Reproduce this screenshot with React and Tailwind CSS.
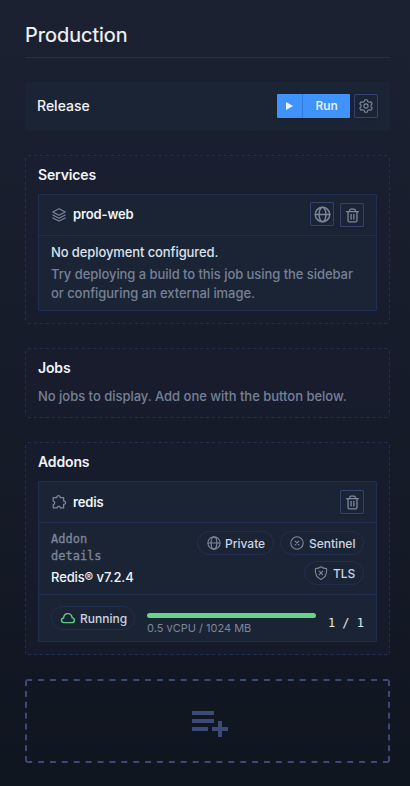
function Icon({ size = 16, width = 1.25, className = "", children }) {
  return (
    <svg
      width={size}
      height={size}
      viewBox="0 0 16 16"
      fill="none"
      stroke="currentColor"
      strokeWidth={width}
      strokeLinecap="round"
      strokeLinejoin="round"
      className={`shrink-0 ${className}`}
    >
      {children}
    </svg>
  );
}

const Globe = (props) => (
  <Icon {...props}>
    <circle cx="8" cy="8" r="6.1" />
    <ellipse cx="8" cy="8" rx="2.9" ry="6.1" />
    <path d="M1.9 8H14.1" />
  </Icon>
);

const Trash = (props) => (
  <Icon {...props}>
    <path d="M2.4 4.4H13.6" />
    <path d="M5.4 4.2V3Q5.4 2 6.4 2H9.6Q10.6 2 10.6 3V4.2" />
    <path d="M3.8 4.6V12.6Q3.8 14 5.2 14H10.8Q12.2 14 12.2 12.6V4.6" />
    <path d="M6.7 7V11.4M9.3 7V11.4" />
  </Icon>
);

const Gear = (props) => (
  <Icon {...props}>
    <circle cx="8" cy="8" r="2.1" />
    <path d="M6.9 1.7H9.1L9.7 3.5L11.2 4.3L13 3.9L14.2 5.8L13 7.2V8.8L14.2 10.2L13 12.1L11.2 11.7L9.7 12.5L9.1 14.3H6.9L6.3 12.5L4.8 11.7L3 12.1L1.8 10.2L3 8.8V7.2L1.8 5.8L3 3.9L4.8 4.3L6.3 3.5Z" />
  </Icon>
);

const Stack = (props) => (
  <Icon {...props}>
    <path d="M8 1.8L14.2 5L8 8.2L1.8 5Z" />
    <path d="M1.8 8L8 11.2L14.2 8" />
    <path d="M1.8 10.9L8 14.1L14.2 10.9" />
  </Icon>
);

const Puzzle = (props) => (
  <Icon {...props}>
    <path d="M2.2 3.6H5.8C5.6 1 9.4 1 9.2 3.6H12.6V7C15.2 6.8 15.2 10.5 12.6 10.3V13.9H9.4C9.3 12 6.2 12 6.1 13.9H2.2V10.5C4.3 10.5 4.3 7.2 2.2 7.1Z" />
  </Icon>
);

const CircleX = (props) => (
  <Icon {...props}>
    <circle cx="8" cy="8" r="6.2" />
    <path d="M6.1 6.1L9.9 9.9M9.9 6.1L6.1 9.9" />
  </Icon>
);

const ShieldX = (props) => (
  <Icon {...props}>
    <path d="M8 1.7C9.6 3 11.5 3.6 13.6 3.6C14.1 8.4 12.4 12.6 8 14.4C3.6 12.6 1.9 8.4 2.4 3.6C4.5 3.6 6.4 3 8 1.7Z" />
    <path d="M6.3 6.2L9.7 9.6M9.7 6.2L6.3 9.6" />
  </Icon>
);

const Cloud = (props) => (
  <Icon {...props}>
    <path d="M4.1 12.6C0.8 12.6 0.6 8.6 3.6 8C4 2.2 11.4 2.2 12.1 7.6C15.4 8.3 15 12.6 12 12.6Z" />
  </Icon>
);

function IconButton({ children, className = "" }) {
  return (
    <button className={`flex h-6 w-6 shrink-0 items-center justify-center rounded-[1px] border border-[#35426d] text-[#7c8799] shadow-sm ${className}`}>
      {children}
    </button>
  );
}

function Section({ title, className, children }) {
  return (
    <section
      className={`mt-6 rounded-[3px] bg-[#1a1e31]/50 bg-[linear-gradient(90deg,#272f50_50%,transparent_50%),linear-gradient(90deg,#272f50_50%,transparent_50%),linear-gradient(#272f50_50%,transparent_50%),linear-gradient(#272f50_50%,transparent_50%)] bg-size-[5.94px_1px,5.94px_1px,1px_5.9px,1px_5.9px] bg-position-[3px_0,3px_100%,0_3px,100%_3px] [background-repeat:repeat-x,repeat-x,repeat-y,repeat-y] p-[13px] ${className}`}
    >
      <h2 className="-mt-[3px] text-[14px] leading-5 font-semibold tracking-[-0.01em] text-[#f1f5f9]">{title}</h2>
      {children}
    </section>
  );
}

function Pill({ icon, children, className = "" }) {
  return (
    <span className={`flex h-6 items-center rounded-full border border-[#222e50] text-[12px] leading-4 font-medium text-[#cbd5e1] ${className}`}>
      {icon}
      <span className="pt-px">{children}</span>
    </span>
  );
}

function CardHeader({ icon, name, nameClass = "", children }) {
  return (
    <div className="flex h-[41px] items-center border-b border-[#222e50] px-3">
      {icon}
      <span className={`ml-1.5 text-[13px] leading-5 font-semibold tracking-[-0.01em] text-[#f1f5f9] ${nameClass}`}>{name}</span>
      <div className="ml-auto flex gap-1.5">{children}</div>
    </div>
  );
}

export default function App() {
  return (
    <main className="flex h-[786px] w-[410px] flex-col bg-linear-to-b from-[#1c2132] to-[#101620] pr-5 pl-[25px] font-['Inter',sans-serif]">
      <h1 className="h-[58px] border-b border-[#242e50] pt-[21px] text-[20px] leading-7 text-[#f1f5f9] [-webkit-text-stroke:0.2px_#f1f5f9]">Production</h1>
      <div className="mt-6 flex h-[49px] items-center rounded-[4px] bg-[#1b2435] px-3 pb-px">
        <span className="text-[14px] leading-5 font-medium text-[#f1f5f9]">Release</span>
        <div className="ml-auto flex h-6 w-[73px] overflow-hidden rounded-[1px] bg-[#4093fa] text-[12px] font-medium text-[#eef5ff] shadow">
          <span className="flex w-[26px] items-center justify-center border-r border-[#3479dc]">
            <svg width="7" height="8" viewBox="0 0 7 8"><path d="M0 0L7 4L0 8Z" fill="currentColor" /></svg>
          </span>
          <span className="flex flex-1 items-center justify-center">Run</span>
        </div>
        <IconButton className="ml-1"><Gear size={16} width={1.1} /></IconButton>
      </div>

      <Section title="Services" className="h-[169px]">
        <div className="mt-[9px] h-[117px] rounded-[1px] border border-[#222e50] bg-[#1b2435]">
          <CardHeader icon={<Stack className="text-[#7c8799]" width={1.1} />} name="prod-web" nameClass="pb-0.5">
            <IconButton className="-mt-px"><Globe size={19} width={1.2} /></IconButton>
            <IconButton><Trash size={17} /></IconButton>
          </CardHeader>
          <p className="px-3 pt-[6px] text-[13px] leading-5 font-medium tracking-[-0.1px] text-[#dbe2ec]">No deployment configured.</p>
          <p className="px-3 pt-[3px] text-[13px] leading-[19px] font-medium tracking-[-0.06px] whitespace-nowrap text-[#758196]">
            Try deploying a build to this job using the sidebar<br />or configuring an external image.
          </p>
        </div>
      </Section>

      <Section title="Jobs" className="h-[70px]">
        <p className="pt-[8px] text-[13px] leading-5 font-medium tracking-[-0.02px] whitespace-nowrap text-[#758196]">No jobs to display. Add one with the button below.</p>
      </Section>

      <Section title="Addons" className="h-[213px]">
        <div className="mt-[9px] h-[161px] rounded-[1px] border border-[#222e50] bg-[#1b2435]">
          <CardHeader icon={<Puzzle className="text-[#7c8799]" />} name="redis">
            <IconButton><Trash size={17} /></IconButton>
          </CardHeader>
          <div className="flex h-[72px] justify-between border-b border-[#222e50] px-3">
            <div className="pt-2">
              <div className="w-[60px] font-['DejaVu_Sans_Mono',monospace] text-[12px] leading-[17px] text-[#7c8799] [-webkit-text-stroke:0.3px_#7c8799]">Addon details</div>
              <div className="mt-[2px] text-[13px] leading-5 font-medium tracking-[-0.1px] whitespace-nowrap text-[#f1f5f9]">Redis® v7.2.4</div>
            </div>
            <div className="flex w-[168px] flex-wrap content-start justify-end gap-1.5 pt-2">
              <Pill className="w-[77px] gap-[3px] pl-2" icon={<Globe width={1.1} className="text-[#7c8799]" />}>Private</Pill>
              <Pill className="w-[84px] gap-1 pl-2" icon={<CircleX width={1.1} className="text-[#7c8799]" />}>Sentinel</Pill>
              <Pill className="w-[60px] gap-1 pl-2" icon={<ShieldX width={1.1} className="text-[#7c8799]" />}>TLS</Pill>
            </div>
          </div>
          <div className="flex h-[46px] px-3 pt-[11px]">
            <Pill className="w-[84px] gap-1 pl-2" icon={<Cloud width={1.4} className="text-[#5fcd85]" />}>Running</Pill>
            <div className="ml-3 pt-[7px]">
              <div className="h-[5px] w-[169px] rounded-full bg-[#68d18a]" />
              <div className="mt-[3px] text-[11px] leading-[14px] text-[#7c8799]">0.5 vCPU / 1024 MB</div>
            </div>
            <span className="ml-auto pt-[9px] font-['DejaVu_Sans_Mono',monospace] text-[12px] leading-4 text-[#e2e8f0]">1 / 1</span>
          </div>
        </div>
      </Section>

      <button className="mt-6 flex h-[84px] items-center justify-center rounded-[3px] bg-[linear-gradient(90deg,#3b4a76_50%,transparent_50%),linear-gradient(90deg,#3b4a76_50%,transparent_50%),linear-gradient(#3b4a76_54%,transparent_54%),linear-gradient(#3b4a76_54%,transparent_54%)] bg-size-[11.9px_2px,11.9px_2px,2px_10.85px,2px_10.85px] bg-position-[1.2px_0,1.2px_100%,0_1.2px,100%_1.2px] [background-repeat:repeat-x,repeat-x,repeat-y,repeat-y] pt-[6px] pl-[5px] text-[#3b4a76]">
        <svg width="36" height="26" viewBox="0 0 36 26" fill="currentColor" shapeRendering="crispEdges">
          <path d="M0 0H22V4H0ZM0 8H22V12H0ZM0 16H16V20H0ZM26 10H30V16H36V20H30V26H26V20H20V16H26Z" />
        </svg>
      </button>
    </main>
  );
}
